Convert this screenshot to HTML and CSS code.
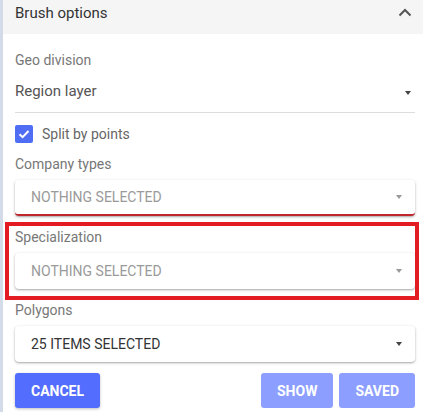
FILE: index.html
```html
<!DOCTYPE html>
<html>
<head>
<meta charset="utf-8">
<link rel="stylesheet" href="styles.css">
</head>
<body>
<div class="panel">
  <div class="header">
    <span class="title">Brush options</span>
    <svg class="chev" width="14" height="9" viewBox="0 0 14 9"><path d="M1.5 7.5 L7 2 L12.5 7.5" fill="none" stroke="#555" stroke-width="2"/></svg>
  </div>
  <div class="content">
    <div class="label">Geo division</div>
    <div class="plain-select">
      <span class="plain-value">Region layer</span>
      <span class="tri dark"></span>
    </div>
    <div class="check-row">
      <span class="checkbox"><svg width="18" height="18" viewBox="0 0 18 18"><path d="M4.5 9.2 L7.6 12.2 L13.5 6" fill="none" stroke="#fff" stroke-width="2"/></svg></span>
      <span class="check-label">Split by points</span>
    </div>
    <div class="field">
      <div class="label">Company types</div>
      <div class="select error">
        <span class="placeholder">NOTHING SELECTED</span>
        <span class="tri"></span>
      </div>
    </div>
    <div class="field highlight">
      <div class="label">Specialization</div>
      <div class="select">
        <span class="placeholder">NOTHING SELECTED</span>
        <span class="tri"></span>
      </div>
    </div>
    <div class="field">
      <div class="label">Polygons</div>
      <div class="select">
        <span class="value">25 ITEMS SELECTED</span>
        <span class="tri dark"></span>
      </div>
    </div>
    <div class="actions">
      <button class="btn primary">CANCEL</button>
      <div class="right-btns">
        <button class="btn light">SHOW</button>
        <button class="btn light">SAVED</button>
      </div>
    </div>
  </div>
</div>
</body>
</html>
```
FILE: styles.css
```css
* { box-sizing: border-box; }
html, body { margin: 0; padding: 0; }
body {
  background: #d3dbe8;
  font-family: Roboto, "Liberation Sans", Arial, sans-serif;
  width: 423px;
  height: 412px;
  overflow: hidden;
}
.panel {
  margin-left: 3px;
  background: #fff;
  height: 412px;
}
.header {
  height: 34px;
  background: #f5f5f5;
  display: flex;
  justify-content: space-between;
  align-items: flex-start;
  padding: 3px 8px 0 12px;
}
.title {
  font-size: 15px;
  line-height: 20px;
  color: #333;
}
.chev { margin-top: 5px; margin-right: 3px; }
.content {
  padding: 18px 8px 0 12px;
}
.label {
  font-size: 14px;
  line-height: 16px;
  color: #777;
}
.plain-select {
  display: flex;
  justify-content: space-between;
  align-items: center;
  padding: 13px 4px 11px 0;
  border-bottom: 1px solid #ddd;
}
.plain-value {
  font-size: 15px;
  line-height: 20px;
  color: #555;
}
.plain-select .tri { margin-top: 3px; }
.tri {
  width: 0; height: 0;
  border-left: 3.5px solid transparent;
  border-right: 3.5px solid transparent;
  border-top: 4px solid #999;
}
.tri.dark { border-top-color: #444; }
.check-row {
  display: flex;
  align-items: center;
  margin-top: 12px;
  height: 18px;
}
.checkbox {
  width: 18px; height: 18px;
  border-radius: 2px;
  background: #4f6ef3;
  display: block;
}
.checkbox svg { display: block; }
.check-label {
  margin-left: 9px;
  font-size: 14px;
  line-height: 18px;
  color: #666;
}
.field { margin-top: 13px; }
.field .select { margin-top: 8px; }
.select {
  height: 36px;
  border-radius: 4px;
  background: #fff;
  box-shadow: 0 1px 3px rgba(0,0,0,0.28), 0 1px 1px rgba(0,0,0,0.10);
  display: flex;
  justify-content: space-between;
  align-items: center;
  padding: 0 13px 0 16px;
}
.select.error {
  border-bottom: 2px solid #c0272d;
}
.placeholder {
  font-size: 14px;
  line-height: 16px;
  color: #9a9a9a;
}
.value {
  font-size: 14px;
  line-height: 16px;
  color: #333;
}
.highlight { position: relative; }
.highlight::after {
  content: "";
  position: absolute;
  left: -10px; right: -4px; top: -7px; bottom: -11px;
  border: 4px solid #e31b23;
  pointer-events: none;
}
.actions {
  display: flex;
  justify-content: space-between;
  margin-top: 11px;
}
.right-btns { display: flex; gap: 6px; }
.btn {
  height: 35px;
  border: none;
  border-radius: 3px;
  padding: 0 16px;
  font-family: Roboto, "Liberation Sans", Arial, sans-serif;
  font-size: 14px;
  font-weight: 700;
  color: #fff;
}
.btn.primary {
  background: #536dfe;
  box-shadow: 0 1px 3px rgba(0,0,0,0.25);
  width: 85px;
}
.btn.light { background: #8c9eff; }
```
